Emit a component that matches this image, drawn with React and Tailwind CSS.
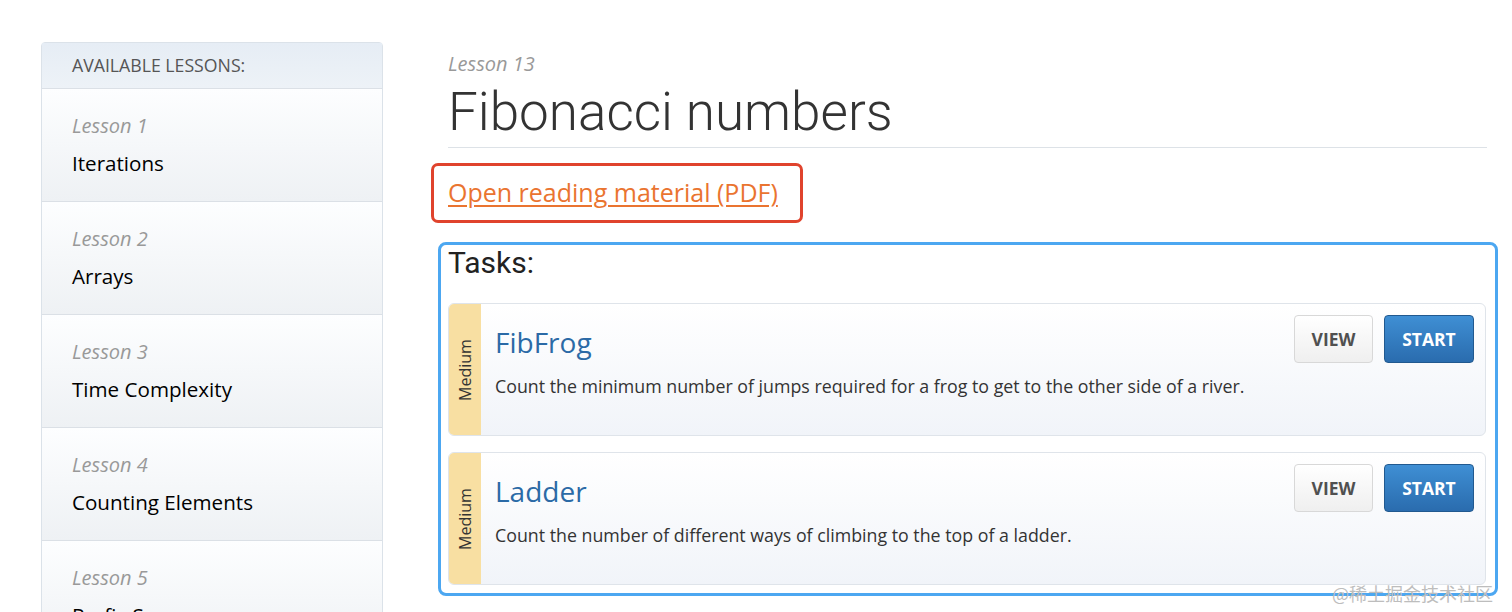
const lessons = [
  { n: 1, title: "Iterations" },
  { n: 2, title: "Arrays" },
  { n: 3, title: "Time Complexity" },
  { n: 4, title: "Counting Elements" },
  { n: 5, title: "Prefix Sums" },
];

const tasks = [
  {
    name: "FibFrog",
    level: "Medium",
    desc: "Count the minimum number of jumps required for a frog to get to the other side of a river.",
  },
  {
    name: "Ladder",
    level: "Medium",
    desc: "Count the number of different ways of climbing to the top of a ladder.",
  },
];

function TaskCard({ task }) {
  return (
    <div className="flex h-[133px] rounded-[6px] border border-[#dfe4ea] bg-gradient-to-b from-white to-[#f1f4f9]">
      {/* difficulty strip */}
      <div className="flex w-[32px] shrink-0 items-center justify-center rounded-l-[5px] bg-[#f8dfa2]">
        <span className="-rotate-90 whitespace-nowrap text-[16px] text-[#333]">{task.level}</span>
      </div>
      <div className="flex flex-1 justify-between pl-[14px] pr-[11px]">
        <div className="pt-[18px]">
          <h3 className="text-[28px] leading-[40px] text-[#2b6aa6]">{task.name}</h3>
          <p className="mt-[11px] text-[17.8px] leading-[26px] text-[#333]">{task.desc}</p>
        </div>
        <div className="flex gap-[11px] pt-[11px]">
          <button className="h-[48px] w-[79px] rounded-[4px] border border-[#d8d8d8] bg-gradient-to-b from-white to-[#efefef] text-[17.5px] font-bold text-[#505050]">
            VIEW
          </button>
          <button className="h-[48px] w-[90px] rounded-[4px] border border-[#21598f] bg-gradient-to-b from-[#3f8fd4] to-[#2a6cae] text-[17.5px] font-bold text-white">
            START
          </button>
        </div>
      </div>
    </div>
  );
}

export default function App() {
  return (
    <div
      className="relative flex h-[612px] overflow-hidden bg-white pt-[42px]"
      style={{ fontFamily: '"Open Sans", "Liberation Sans", sans-serif' }}
    >
      {/* Sidebar */}
      <aside className="ml-[41px] w-[342px] shrink-0 self-start rounded-t-[4px] border border-[#dbe2e9]">
        <div className="flex h-[45px] items-center bg-gradient-to-b from-[#e6edf5] to-[#edf2f7] pl-[30px] text-[17.7px] text-[#555]">
          AVAILABLE LESSONS:
        </div>
        {lessons.map((l) => (
          <div
            key={l.n}
            className="h-[113px] border-t border-[#dbe0e6] bg-gradient-to-b from-[#fdfeff] to-[#eef1f4] pl-[30px] pt-[23px]"
          >
            <div className="text-[20px] italic leading-[28px] text-[#999]">Lesson {l.n}</div>
            <div className="mt-[9px] text-[20.6px] leading-[28px] text-black">{l.title}</div>
          </div>
        ))}
      </aside>

      {/* Main */}
      <main className="ml-[65px] w-[1039px] pt-[8px]">
        <div className="text-[20px] italic leading-[28px] text-[#999]">Lesson 13</div>
        <h1
          className="mt-[6px] border-b border-[#dde2e7] pb-[7px] text-[53px] font-light leading-[56px] text-[#333]"
          style={{ fontFamily: 'Roboto, "Liberation Sans", sans-serif' }}
        >
          Fibonacci numbers
        </h1>

        <div className="-ml-[17px] mt-[15px] flex h-[60px] w-[372px] items-center rounded-[7px] border-[3px] border-[#e0432d] pl-[14px]">
          <a href="#" className="text-[25px] text-[#ea7430] underline underline-offset-[3px]">
            Open reading material (PDF)
          </a>
        </div>

        <div className="-ml-[10px] mt-[19px] h-[354px] w-[1060px] rounded-[8px] border-[3px] border-[#4ca7f1] pl-[7px] pr-[9px]">
          <h2
            className="text-[30px] leading-[36px] text-[#222]"
            style={{ fontFamily: 'Roboto, "Liberation Sans", sans-serif' }}
          >
            Tasks:
          </h2>
          <div className="mt-[22px] flex flex-col gap-[16px]">
            {tasks.map((t) => (
              <TaskCard key={t.name} task={t} />
            ))}
          </div>
        </div>
      </main>

      {/* watermark */}
      <div
        className="absolute left-[1332px] top-[580px] text-[18px] text-[#bdbdbd]"
        style={{ fontFamily: '"Noto Sans CJK SC", sans-serif' }}
      >
        @稀土掘金技术社区
      </div>
    </div>
  );
}
